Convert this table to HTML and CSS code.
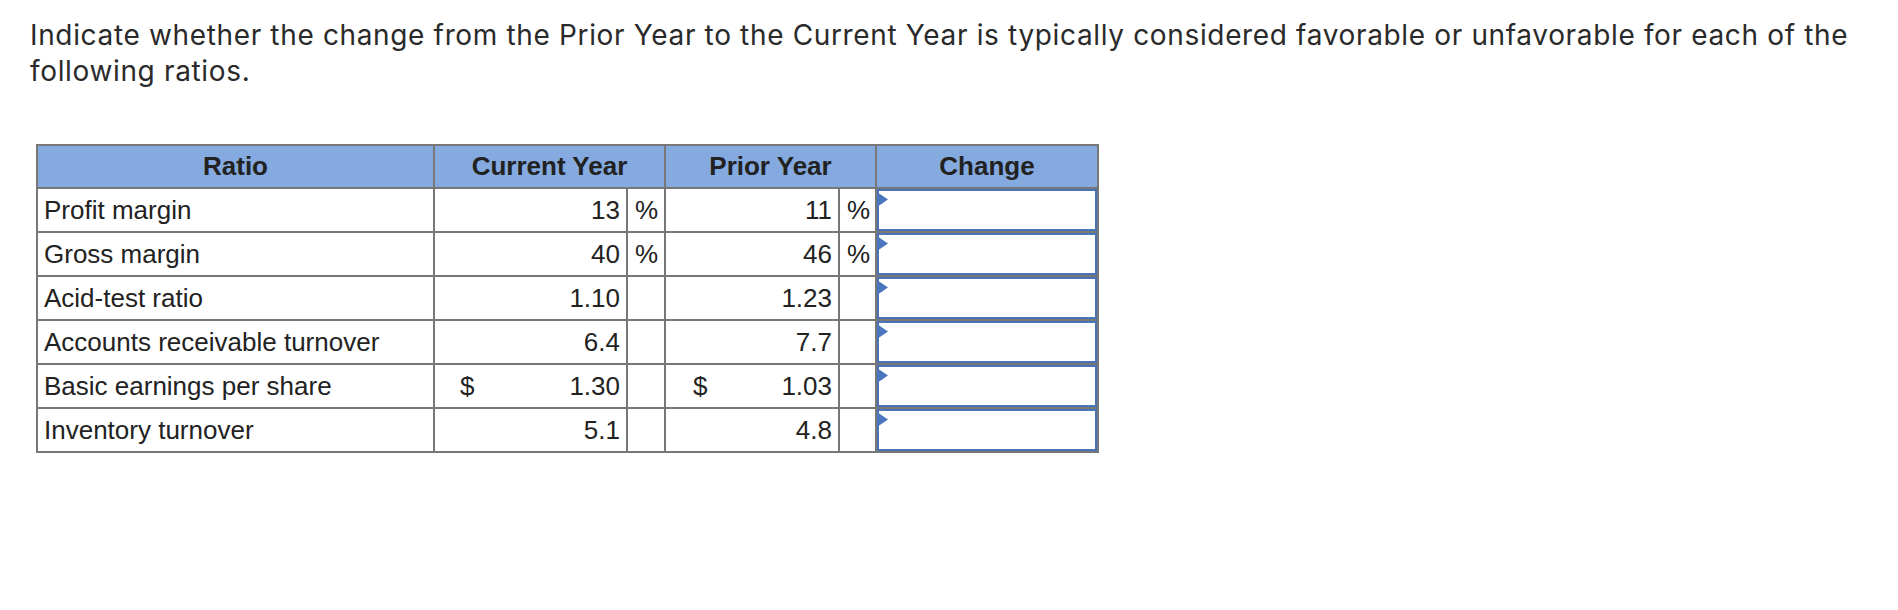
FILE: index.html
```html
<!DOCTYPE html>
<html lang="en">
<head>
<meta charset="utf-8">
<title>Ratio changes</title>
<link rel="stylesheet" href="styles.css">
</head>
<body>
<main class="page">
  <p class="prompt">Indicate whether the change from the Prior Year to the Current Year is typically considered favorable or unfavorable for each of the following ratios.</p>
  <div class="grid">
    <div class="hd">Ratio</div>
    <div class="hd span2">Current Year</div>
    <div class="hd span2">Prior Year</div>
    <div class="hd">Change</div>

    <div class="label">Profit margin</div>
    <div class="num">13</div><div class="unit">%</div>
    <div class="num">11</div><div class="unit">%</div>
    <div class="change"><span class="box"></span><span class="flag"></span></div>

    <div class="label">Gross margin</div>
    <div class="num">40</div><div class="unit">%</div>
    <div class="num">46</div><div class="unit">%</div>
    <div class="change"><span class="box"></span><span class="flag"></span></div>

    <div class="label">Acid-test ratio</div>
    <div class="num">1.10</div><div class="unit"></div>
    <div class="num">1.23</div><div class="unit"></div>
    <div class="change"><span class="box"></span><span class="flag"></span></div>

    <div class="label">Accounts receivable turnover</div>
    <div class="num">6.4</div><div class="unit"></div>
    <div class="num">7.7</div><div class="unit"></div>
    <div class="change"><span class="box"></span><span class="flag"></span></div>

    <div class="label">Basic earnings per share</div>
    <div class="num money cur-a"><span class="cur">$</span><span>1.30</span></div><div class="unit"></div>
    <div class="num money cur-b"><span class="cur">$</span><span>1.03</span></div><div class="unit"></div>
    <div class="change"><span class="box"></span><span class="flag"></span></div>

    <div class="label">Inventory turnover</div>
    <div class="num">5.1</div><div class="unit"></div>
    <div class="num">4.8</div><div class="unit"></div>
    <div class="change"><span class="box"></span><span class="flag"></span></div>
  </div>
</main>
</body>
</html>
```
FILE: styles.css
```css
html, body {
  margin: 0;
  padding: 0;
  background: #ffffff;
}

.page {
  padding: 17px 0 0 0;
}

.prompt {
  margin: 0 0 55px 30px;
  width: 1835px;
  font-family: Inter, Lato, sans-serif;
  font-size: 28px;
  letter-spacing: 0.65px;
  line-height: 36px;
  color: #2a2a2a;
}

.grid {
  margin-left: 36px;
  width: max-content;
  display: grid;
  grid-template-columns: 395px 191px 36px 172px 35px 220px;
  grid-template-rows: 41px repeat(6, 42px);
  gap: 2px;
  padding: 2px;
  background: #777777;
  font-family: "Liberation Sans", Arial, sans-serif;
  font-size: 26px;
  color: #222222;
}

.grid > div {
  background: #ffffff;
  display: flex;
  align-items: center;
}

.grid > .hd {
  background: #84aadf;
  font-weight: bold;
  justify-content: center;
}

.span2 {
  grid-column: span 2;
}

.label {
  padding-left: 6px;
}

.num {
  justify-content: flex-end;
  padding-right: 6px;
}

.money {
  justify-content: space-between;
}

.cur-a {
  padding-left: 25px;
}

.cur-b {
  padding-left: 27px;
}

.unit {
  padding-left: 7px;
}

.grid > .change {
  position: relative;
  align-items: stretch;
}

.box {
  flex: 1;
  border: 2px solid #4a72b6;
}

.flag {
  position: absolute;
  left: 0;
  top: 3px;
  width: 11px;
  height: 15px;
  background: #4a76bf;
  clip-path: polygon(0 0, 100% 50%, 0 100%);
}
```
